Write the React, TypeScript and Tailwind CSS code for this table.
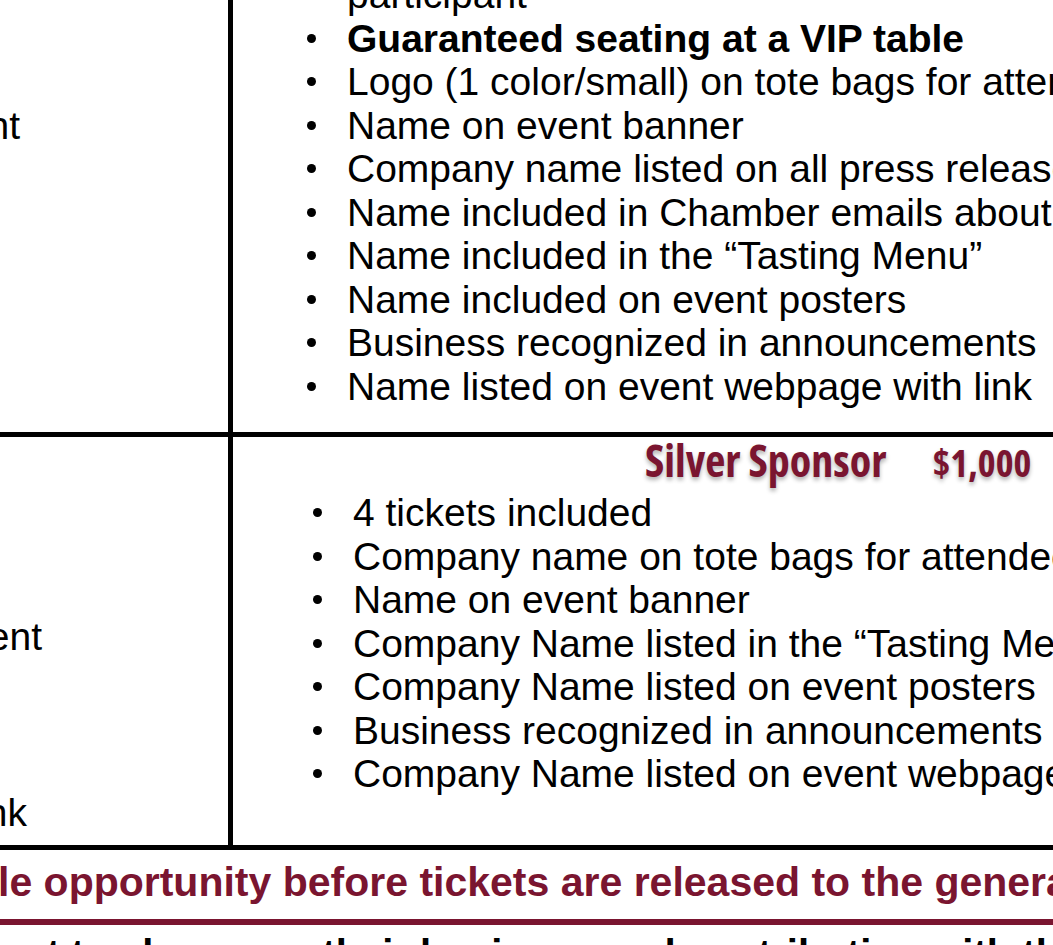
import React from "react";

const silverPerks = [
  "4 tickets included",
  "Company name on tote bags for attendees",
  "Name on event banner",
  "Company Name listed in the “Tasting Menu”",
  "Company Name listed on event posters",
  "Business recognized in announcements",
  "Company Name listed on event webpage with link",
];

const goldPerks: {text: string; bold?: boolean}[] = [
  {text: "Guaranteed seating at a VIP table", bold: true},
  {text: "Logo (1 color/small) on tote bags for attendees"},
  {text: "Name on event banner"},
  {text: "Company name listed on all press releases"},
  {text: "Name included in Chamber emails about the event"},
  {text: "Name included in the “Tasting Menu”"},
  {text: "Name included on event posters"},
  {text: "Business recognized in announcements"},
  {text: "Name listed on event webpage with link"},
];

const Bullet = () => (
  <span className="w-[9px] h-[9px] rounded-full bg-black shrink-0" />
);

export default function App() {
  return (
    <div className="w-[1053px] h-[945px] overflow-hidden bg-white text-black font-['Liberation_Sans',Arial,sans-serif] text-[39px] leading-[43.5px]">
      {/* gold row */}
      <div className="flex h-[437px] border-b-[5px] border-black">
        <div className="w-[233px] shrink-0 border-r-[5px] border-black pt-[104px]">
          <div className="flex justify-end w-[20px]">
            <span className="whitespace-nowrap">the event</span>
          </div>
        </div>
        <div className="flex-1 overflow-hidden">
          <div className="-mt-[27px]">
            <div className="pl-[114px] whitespace-nowrap">participant</div>
            <ul>
              {goldPerks.map((p, i) => (
                <li key={i} className="flex items-center whitespace-nowrap pl-[74px]">
                  <Bullet />
                  <span className={`ml-[31px] ${p.bold ? "font-bold" : ""}`}>{p.text}</span>
                </li>
              ))}
            </ul>
          </div>
        </div>
      </div>

      {/* silver row */}
      <div className="flex h-[413px] border-b-[5px] border-black">
        <div className="w-[233px] shrink-0 border-r-[5px] border-black flex flex-col">
          <div className="mt-[178px]">
            <div className="flex justify-end w-[42px]">
              <span className="whitespace-nowrap">the event</span>
            </div>
          </div>
          <div className="mt-[132px]">
            <div className="flex justify-end w-[27px]">
              <span className="whitespace-nowrap">with link</span>
            </div>
          </div>
        </div>
        <div className="flex-1 overflow-hidden">
          <div className="flex items-baseline pl-[412px] pt-[3px] h-[45px] text-[#7a1530] font-bold font-['Open_Sans','DejaVu_Sans_Condensed',sans-serif] font-stretch-[75%] text-[44px] leading-[40px] [text-shadow:0_3px_4px_rgba(0,0,0,0.3)]">
            <span className="whitespace-nowrap">Silver Sponsor</span>
            <span className="ml-[46px] text-[38px] whitespace-nowrap">$1,000</span>
          </div>
          <ul className="mt-[9px]">
            {silverPerks.map((p, i) => (
              <li key={i} className="flex items-center whitespace-nowrap pl-[80px]">
                <Bullet />
                <span className="ml-[31px]">{p}</span>
              </li>
            ))}
          </ul>
        </div>
      </div>

      {/* call to action */}
      <div className="h-[69px] flex items-center pb-[3px] -ml-[2px] whitespace-nowrap font-bold text-[41px] text-[#7a1530]">
        le opportunity before tickets are released to the general public!
      </div>
      <div className="h-[6px] bg-[#7a1530]" />
      <div className="pt-[6px] whitespace-nowrap font-bold text-[40px] leading-[46px]">
        ent to showcase their business and contribution with the community
      </div>
    </div>
  );
}
